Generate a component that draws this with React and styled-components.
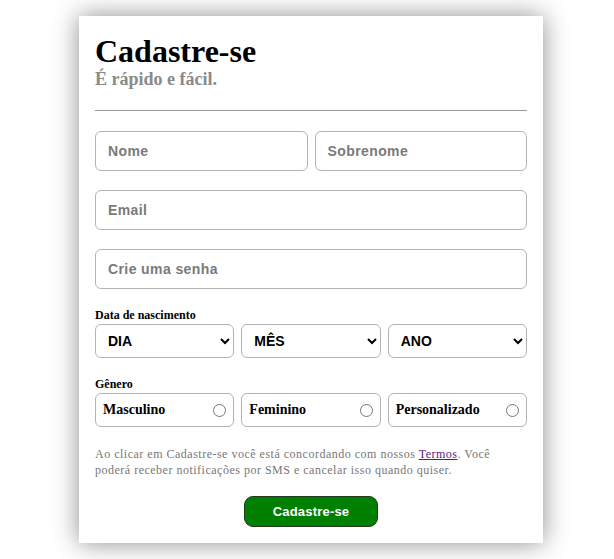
import React from "react";
import styled, { createGlobalStyle } from "styled-components";

const GlobalStyle = createGlobalStyle`
  html, body {
    margin: 0;
    padding: 0;
    background: #ffffff;
  }
  * {
    box-sizing: border-box;
  }
`

const Page = styled.div`
  padding: 16px 0 16px 79px;
`

const Card = styled.form`
  width: 464px;
  background: #ffffff;
  padding: 17px 16px 16px 16px;
  box-shadow: 0 0 24px rgba(0, 0, 0, 0.45);
  display: flex;
  flex-direction: column;
`

const Title = styled.h1`
  margin: 0;
  font-family: "Liberation Serif", serif;
  font-size: 32px;
  line-height: 36px;
  font-weight: bold;
  color: #000;
`

const Subtitle = styled.h2`
  margin: 0;
  font-family: "Liberation Serif", serif;
  font-size: 18px;
  line-height: 20px;
  font-weight: bold;
  color: #8a8a8a;
`

const Divider = styled.div`
  height: 1px;
  background: #9a9a9a;
  margin: 21px 0 20px;
`

const Row = styled.div`
  display: grid;
  grid-template-columns: repeat(${props => props.cols || 1}, 1fr);
  gap: 7px;
  margin-bottom: ${props => props.mb || 0}px;
`

const TextInput = styled.input`
  width: 100%;
  height: 40px;
  border: 1px solid #b3b3b3;
  border-radius: 6px;
  padding: 0 12px;
  font-family: "Liberation Sans", Arial, sans-serif;
  font-size: 14px;
  font-weight: bold;
  letter-spacing: 0.4px;
  color: #333;
  outline: none;
  &::placeholder {
    color: #7a7a7a;
  }
`

const Label = styled.div`
  font-family: "Liberation Serif", serif;
  font-size: 12px;
  line-height: 14px;
  font-weight: bold;
  color: #000;
  margin: ${props => props.mt || 0}px 0 2px;
`

const Select = styled.select`
  width: 100%;
  height: 34px;
  border: 1px solid #b3b3b3;
  border-radius: 6px;
  padding: 0 6px 0 8px;
  background: #ffffff;
  font-family: "Liberation Sans", Arial, sans-serif;
  font-size: 14px;
  font-weight: bold;
  color: #000;
`

const RadioBox = styled.label`
  height: 34px;
  border: 1px solid #b3b3b3;
  border-radius: 6px;
  padding: 0 7px 0 7px;
  display: flex;
  align-items: center;
  justify-content: space-between;
  font-family: "Liberation Serif", serif;
  font-size: 14px;
  font-weight: bold;
  color: #000;
`

const Radio = styled.input`
  width: 13px;
  height: 13px;
  margin: 0;
`

const Terms = styled.p`
  margin: 19px 0 18px;
  font-family: "Liberation Serif", serif;
  font-size: 12px;
  line-height: 16px;
  letter-spacing: 0.5px;
  color: #777;
  a {
    color: #551a8b;
    text-decoration: underline;
  }
`

const Submit = styled.button`
  align-self: center;
  width: 134px;
  height: 31px;
  border: 1px solid #1f3a1f;
  border-radius: 9px;
  background: #008000;
  color: #ffffff;
  font-family: "Liberation Sans", Arial, sans-serif;
  font-size: 13px;
  font-weight: bold;
  letter-spacing: 0.2px;
  cursor: pointer;
`

const genders = ["Masculino", "Feminino", "Personalizado"];

const App = () => {
  return (
    <>
      <GlobalStyle />
      <Page>
        <Card onSubmit={e => e.preventDefault()}>
          <Title>Cadastre-se</Title>
          <Subtitle>É rápido e fácil.</Subtitle>
          <Divider />
          <Row cols={2} mb={19}>
            <TextInput placeholder="Nome" />
            <TextInput placeholder="Sobrenome" />
          </Row>
          <Row mb={19}>
            <TextInput placeholder="Email" />
          </Row>
          <Row>
            <TextInput type="password" placeholder="Crie uma senha" />
          </Row>
          <Label mt={19}>Data de nascimento</Label>
          <Row cols={3}>
            <Select defaultValue="DIA">
              <option>DIA</option>
            </Select>
            <Select defaultValue="MÊS">
              <option>MÊS</option>
            </Select>
            <Select defaultValue="ANO">
              <option>ANO</option>
            </Select>
          </Row>
          <Label mt={19}>Gênero</Label>
          <Row cols={3}>
            {genders.map(g => (
              <RadioBox key={g}>
                {g}
                <Radio type="radio" name="genero" value={g} />
              </RadioBox>
            ))}
          </Row>
          <Terms>
            Ao clicar em Cadastre-se você está concordando com nossos <a href="#termos">Termos</a>. Você
            poderá receber notificações por SMS e cancelar isso quando quiser.
          </Terms>
          <Submit type="submit">Cadastre-se</Submit>
        </Card>
      </Page>
    </>
  );
};

export default App;
